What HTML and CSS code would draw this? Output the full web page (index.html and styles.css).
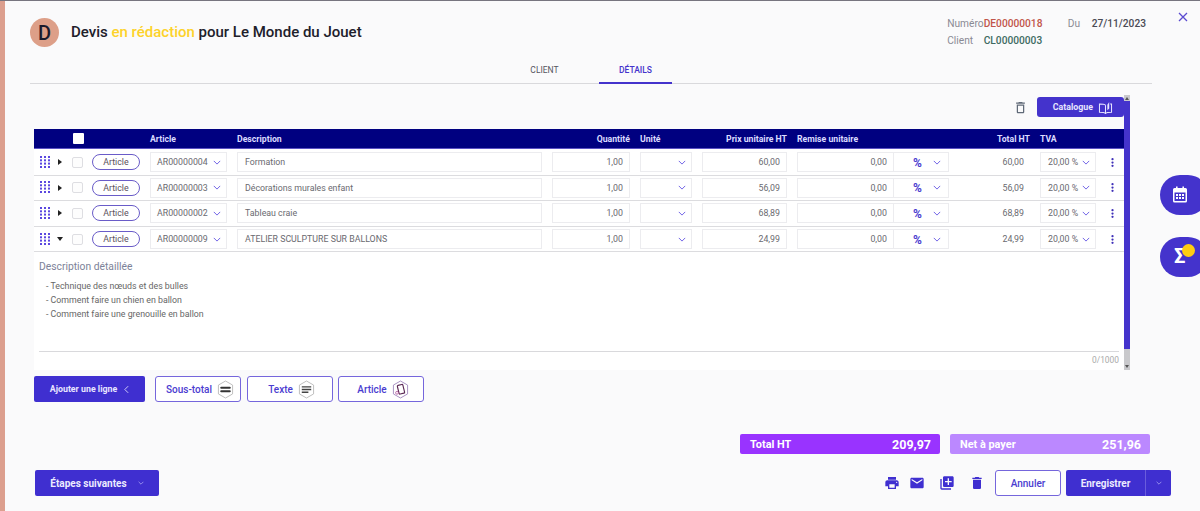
FILE: index.html
```html
<!DOCTYPE html>
<html lang="fr">
<head>
<meta charset="utf-8">
<title>Devis</title>
<link rel="stylesheet" href="styles.css">
</head>
<body>
<svg class="defs" width="0" height="0" aria-hidden="true">
  <symbol id="chev" viewBox="0 0 10 6"><path d="M1 1l4 4 4-4" fill="none" stroke="currentColor" stroke-width="1"/></symbol>
  <symbol id="grip" viewBox="0 0 11 12"><g fill="currentColor"><rect x="0" y="0" width="2" height="2"/><rect x="4" y="0" width="2" height="2"/><rect x="8" y="0" width="2" height="2"/><rect x="0" y="3.3" width="2" height="2"/><rect x="4" y="3.3" width="2" height="2"/><rect x="8" y="3.3" width="2" height="2"/><rect x="0" y="6.6" width="2" height="2"/><rect x="4" y="6.6" width="2" height="2"/><rect x="8" y="6.6" width="2" height="2"/><rect x="0" y="10" width="2" height="2"/><rect x="4" y="10" width="2" height="2"/><rect x="8" y="10" width="2" height="2"/></g></symbol>
  <symbol id="dots" viewBox="0 0 4 12"><g fill="currentColor"><circle cx="2" cy="1.6" r="1.5"/><circle cx="2" cy="6" r="1.5"/><circle cx="2" cy="10.4" r="1.5"/></g></symbol>
  <symbol id="trash" viewBox="0 0 24 24"><path fill="currentColor" d="M6 19c0 1.1.9 2 2 2h8c1.1 0 2-.9 2-2V7H6v12zM19 4h-3.5l-1-1h-5l-1 1H5v2h14V4z"/></symbol>
</svg>
<div class="stripe"></div>
<div class="main">
  <header class="header">
    <div class="head-top">
      <div class="avatar">D</div>
      <h1 class="title">Devis <span class="status">en rédaction</span> pour Le Monde du Jouet</h1>
      <div class="meta">
        <span class="meta-label">Numéro</span><span class="meta-num">DE00000018</span><span class="meta-label meta-du">Du</span><span class="meta-date">27/11/2023</span>
        <span class="meta-label">Client</span><span class="meta-client">CL00000003</span>
      </div>
    </div>
    <nav class="tabs">
      <a class="tab">CLIENT</a>
      <a class="tab tab-active">DÉTAILS</a>
    </nav>
  </header>

  <section class="panel">
    <div class="panel-body">
      <div class="toolbar">
        <svg class="tool-trash" viewBox="0 0 24 24"><path fill="currentColor" d="M6 19c0 1.1.9 2 2 2h8c1.1 0 2-.9 2-2V7H6v12zM8 9h8v10H8V9zm7.5-5l-1-1h-5l-1 1H5v2h14V4z"/></svg>
        <button class="btn-catalogue">Catalogue
          <svg class="book" viewBox="0 0 16 14"><path d="M8 4.5C7 3.6 5 3.2 1.5 3.2v9C5 12.2 7 12.6 8 13.5c1-.9 3-1.3 6.5-1.3v-9H13M8 4.5v9" fill="none" stroke="currentColor" stroke-width="1.1"/><path d="M10 10V4l2-3v7z" fill="currentColor"/></svg>
        </button>
      </div>

      <div class="table">
        <div class="row row-head">
          <span></span><span></span><span class="head-check"></span><span></span>
          <span class="th">Article</span>
          <span class="th">Description</span>
          <span class="th th-r th-qty">Quantité</span>
          <span class="th">Unité</span>
          <span class="th th-r th-price">Prix unitaire HT</span>
          <span class="th">Remise unitaire</span>
          <span></span>
          <span class="th th-r th-total">Total HT</span>
          <span class="th">TVA</span>
          <span></span>
        </div>

        <div class="row">
          <svg class="grip"><use href="#grip"/></svg><span class="caret caret-right"></span><span class="check"></span><span class="pill">Article</span>
          <div class="field f-article">AR00000004<svg class="chev"><use href="#chev"/></svg></div>
          <div class="field f-desc">Formation</div>
          <div class="field f-qty">1,00</div>
          <div class="field f-unit"><svg class="chev"><use href="#chev"/></svg></div>
          <div class="field f-price">60,00</div>
          <div class="field f-rem">0,00</div>
          <div class="field f-pct"><b class="pct">%</b><svg class="chev"><use href="#chev"/></svg></div>
          <div class="total">60,00</div>
          <div class="field f-tva">20,00 %<svg class="chev"><use href="#chev"/></svg></div>
          <svg class="dots"><use href="#dots"/></svg>
        </div>

        <div class="row">
          <svg class="grip"><use href="#grip"/></svg><span class="caret caret-right"></span><span class="check"></span><span class="pill">Article</span>
          <div class="field f-article">AR00000003<svg class="chev"><use href="#chev"/></svg></div>
          <div class="field f-desc">Décorations murales enfant</div>
          <div class="field f-qty">1,00</div>
          <div class="field f-unit"><svg class="chev"><use href="#chev"/></svg></div>
          <div class="field f-price">56,09</div>
          <div class="field f-rem">0,00</div>
          <div class="field f-pct"><b class="pct">%</b><svg class="chev"><use href="#chev"/></svg></div>
          <div class="total">56,09</div>
          <div class="field f-tva">20,00 %<svg class="chev"><use href="#chev"/></svg></div>
          <svg class="dots"><use href="#dots"/></svg>
        </div>

        <div class="row">
          <svg class="grip"><use href="#grip"/></svg><span class="caret caret-right"></span><span class="check"></span><span class="pill">Article</span>
          <div class="field f-article">AR00000002<svg class="chev"><use href="#chev"/></svg></div>
          <div class="field f-desc">Tableau craie</div>
          <div class="field f-qty">1,00</div>
          <div class="field f-unit"><svg class="chev"><use href="#chev"/></svg></div>
          <div class="field f-price">68,89</div>
          <div class="field f-rem">0,00</div>
          <div class="field f-pct"><b class="pct">%</b><svg class="chev"><use href="#chev"/></svg></div>
          <div class="total">68,89</div>
          <div class="field f-tva">20,00 %<svg class="chev"><use href="#chev"/></svg></div>
          <svg class="dots"><use href="#dots"/></svg>
        </div>

        <div class="row">
          <svg class="grip"><use href="#grip"/></svg><span class="caret caret-down"></span><span class="check"></span><span class="pill">Article</span>
          <div class="field f-article">AR00000009<svg class="chev"><use href="#chev"/></svg></div>
          <div class="field f-desc">ATELIER SCULPTURE SUR BALLONS</div>
          <div class="field f-qty">1,00</div>
          <div class="field f-unit"><svg class="chev"><use href="#chev"/></svg></div>
          <div class="field f-price">24,99</div>
          <div class="field f-rem">0,00</div>
          <div class="field f-pct"><b class="pct">%</b><svg class="chev"><use href="#chev"/></svg></div>
          <div class="total">24,99</div>
          <div class="field f-tva">20,00 %<svg class="chev"><use href="#chev"/></svg></div>
          <svg class="dots"><use href="#dots"/></svg>
        </div>

        <div class="detail">
          <div class="detail-label">Description détaillée</div>
          <div class="detail-text">
            <p>- Technique des nœuds et des bulles</p>
            <p>- Comment faire un chien en ballon</p>
            <p>- Comment faire une grenouille en ballon</p>
          </div>
          <div class="detail-count">0/1000</div>
        </div>
      </div>
    </div>
    <div class="scrollbar"><span class="scroll-up"></span><span class="scroll-thumb"></span><span class="scroll-down"></span></div>
  </section>

  <div class="add-row">
    <button class="btn-add">Ajouter une ligne<svg class="add-chev" viewBox="0 0 6 10"><path d="M5 1L1 5l4 4" fill="none" stroke="currentColor" stroke-width="1"/></svg></button>
    <button class="btn-line">Sous-total
      <svg class="hex" viewBox="0 0 18 20"><path d="M9 1l7.500 4.300v9.400L9 19l-7.500-4.300v-9.400z" fill="#fff" stroke="#bbb"/><path d="M4.500 7h9a1 1 0 0 1 0 2.200h-9a1 1 0 0 1 0-2.200zM4.500 10.800h9a1 1 0 0 1 0 2.200h-9a1 1 0 0 1 0-2.200z" fill="#333"/></svg>
    </button>
    <button class="btn-line">Texte
      <svg class="hex" viewBox="0 0 18 20"><path d="M9 1l7.500 4.300v9.400L9 19l-7.500-4.300v-9.400z" fill="#fff" stroke="#bbb"/><path d="M4 6.500h10v1.500H4zM4 9.300h10v1.500H4zM4 12.100h7v1.500H4z" fill="#444"/></svg>
    </button>
    <button class="btn-line">Article
      <svg class="hex" viewBox="0 0 18 20"><path d="M9 1l7.500 4.300v9.400L9 19l-7.500-4.300v-9.400z" fill="#fff" stroke="#a58cc0"/><rect x="6.500" y="5" width="6" height="9.500" rx="1" transform="rotate(-14 9.500 9.700)" fill="none" stroke="#5b2a55" stroke-width="1.200"/><circle cx="5.300" cy="13.500" r="1.500" fill="none" stroke="#b0529a" stroke-width=".8"/></svg>
    </button>
  </div>

  <div class="totals">
    <div class="sum sum-ht"><span>Total HT</span><strong>209,97</strong></div>
    <div class="sum sum-net"><span>Net à payer</span><strong>251,96</strong></div>
  </div>

  <footer class="footer">
    <button class="btn-steps">Étapes suivantes<svg class="steps-chev"><use href="#chev"/></svg></button>
    <div class="foot-actions">
      <svg class="ico ico-print" viewBox="0 0 24 24"><path fill="currentColor" d="M19 8H5c-1.660 0-3 1.340-3 3v6h4v4h12v-4h4v-6c0-1.660-1.340-3-3-3zm-3 11H8v-5h8v5zm3-7c-.55 0-1-.45-1-1s.45-1 1-1 1 .45 1 1-.45 1-1 1zm-1-9H6v4h12V3z"/></svg>
      <svg class="ico ico-mail" viewBox="0 0 24 24"><path fill="currentColor" d="M20 4H4c-1.100 0-1.990.9-1.990 2L2 18c0 1.100.9 2 2 2h16c1.100 0 2-.9 2-2V6c0-1.100-.9-2-2-2zm0 4l-8 5-8-5V6l8 5 8-5v2z"/></svg>
      <svg class="ico ico-copy" viewBox="0 0 24 24"><path fill="currentColor" d="M4 6H2v14c0 1.100.9 2 2 2h14v-2H4V6zm16-4H8c-1.100 0-2 .9-2 2v12c0 1.100.9 2 2 2h12c1.100 0 2-.9 2-2V4c0-1.100-.9-2-2-2zm-1 9h-4v4h-2v-4H9V9h4V5h2v4h4v2z"/></svg>
      <svg class="ico ico-trash"><use href="#trash"/></svg>
      <button class="btn-cancel">Annuler</button>
      <div class="save-group">
        <button class="btn-save">Enregistrer</button>
        <button class="btn-save-more"><svg class="steps-chev"><use href="#chev"/></svg></button>
      </div>
    </div>
  </footer>
</div>

<button class="close" aria-label="Fermer"><svg viewBox="0 0 10 10"><path d="M1 1l8 8M9 1l-8 8" stroke="currentColor" stroke-width="1.300"/></svg></button>
<div class="side side-cal">
  <svg viewBox="0 0 16 17"><path fill="#fff" d="M2.500 2H4V.6h1.600V2h4.800V.6H12V2h1.500A1.500 1.500 0 0 1 15 3.500v11.500a1.500 1.500 0 0 1-1.500 1.500h-11A1.500 1.500 0 0 1 1 15V3.500A1.500 1.500 0 0 1 2.500 2zm0 4.500V15h11V6.500z"/><path fill="#fff" d="M4 8h2v2H4zM7 8h2v2H7zM10 8h2v2h-2zM4 11h2v2H4zM7 11h2v2H7zM10 11h2v2h-2z"/></svg>
</div>
<div class="side side-sum"><span class="sigma">Σ</span><span class="side-dot"></span></div>
</body>
</html>
```
FILE: styles.css
```css
* { box-sizing: border-box; }
html, body { margin: 0; padding: 0; }
body {
  width: 1200px; height: 511px; overflow: hidden; display: flex;
  background: #fafafb; font-family: Roboto, "Liberation Sans", sans-serif;
  border-top: 1px solid #77757f; position: relative; color: #555;
}
button { font-family: inherit; cursor: pointer; padding: 0; }
.defs { position: absolute; }
.stripe { width: 5px; background: #dc9f8e; flex: none; margin-top: -1px; }
.main { width: 1195px; padding-left: 25px; display: flex; flex-direction: column; }

.header { width: 1122px; height: 83px; border-bottom: 1px solid #d9d9dc; flex: none; }
.head-top { height: 60px; display: flex; padding-top: 17px; }
.avatar {
  width: 29px; height: 29px; border-radius: 50%; background: #dd9f88; color: #1a1a2c;
  font-size: 20px; font-weight: 500; display: flex; align-items: center; justify-content: center; flex: none;
}
.title { margin: 0 0 0 12px; font-size: 15px; font-weight: 500; line-height: 29px; color: #20202a; white-space: nowrap; }
.status { color: #fdd22a; }
.meta {
  margin-left: auto; margin-top: -1px; margin-right: 6px; display: grid; grid-template-columns: 36.500px 84px 24px auto;
  grid-auto-rows: 17px; font-size: 10.200px; line-height: 13px; align-content: start;
}
.meta-label { color: #8a8a94; }
.meta-num { color: #c1554a; font-weight: 500; }
.meta-date { color: #4a4a55; font-weight: 500; }
.meta-client { color: #3e6b62; font-weight: 500; }

.tabs { display: flex; justify-content: center; gap: 18px; height: 22px; padding-right: 2px; }
.tab { width: 73px; height: 23px; font-size: 8.500px; line-height: 18px; text-align: center; color: #55555f; }
.tab-active { color: #4433cc; font-weight: 500; border-bottom: 2px solid #4433cc; }

.panel { margin: 11px 0 0 4px; width: 1096px; height: 275px; display: flex; flex: none; }
.panel-body { width: 1090px; display: flex; flex-direction: column; }
.toolbar { height: 34px; display: flex; align-items: flex-start; justify-content: flex-end; padding-top: 2px; }
.tool-trash { width: 15px; height: 15px; color: #606a78; margin: 3px 9px 0 0; }
.btn-catalogue {
  width: 87px; height: 20px; border: 0; border-radius: 3px; background: #4433cc; color: #e8e6ff;
  font-size: 8.800px; font-weight: 700; display: flex; align-items: center; justify-content: flex-end; gap: 5px; padding-right: 11px;
}
.book { width: 15px; height: 13px; }

.table { flex: 1; background: #fff; display: flex; flex-direction: column; }
.row {
  display: grid; align-items: center; height: 25.600px; border-bottom: 1px solid #dcdcdf; flex: none;
  grid-template-columns: 20px 18px 20px 58px 87px 315px 88px 62px 95px 96px 56px 91px 66px 18px;
}
.row-head { height: 20px; margin-bottom: 1px; background: #000080; border: 0; border-bottom: 1px solid #5b52c4; }
.th { font-size: 8.700px; font-weight: 700; color: #dcdcff; white-space: nowrap; }
.th-r { text-align: right; }
.th-qty { padding-right: 10px; }
.th-price { padding-right: 10px; }
.th-total { padding-right: 10px; }
.head-check { width: 11px; height: 11px; background: #fff; border-radius: 1px; margin-left: 1px; }

.grip { width: 11px; height: 12px; color: #5b48e0; margin-left: 6px; margin-top: -1px; }
.caret { width: 0; height: 0; margin-left: 4px; }
.caret-right { border-left: 4px solid #222; border-top: 3px solid transparent; border-bottom: 3px solid transparent; }
.caret-down { border-top: 4px solid #222; border-left: 3px solid transparent; border-right: 3px solid transparent; margin-left: 3px; }
.check { width: 11px; height: 11px; border: 1px solid #dedee2; border-radius: 2px; background: #fdfdfd; }
.pill {
  width: 48px; height: 16px; border: 1px solid #6a5cc8; border-radius: 8px; font-size: 8.800px; line-height: 14px;
  text-align: center; color: #5a505a;
}
.field {
  height: 20px; border: 1px solid #ececef; background: #fff; font-size: 8.800px; line-height: 18px; color: #6a6a70;
  padding: 0 6px; display: flex; align-items: center; white-space: nowrap;
}
.chev { width: 8px; height: 5px; color: #4f3fe0; flex: none; margin-left: auto; }
.f-article { width: 77px; padding-right: 5px; }
.f-desc { width: 305px; padding-left: 7px; }
.f-qty { width: 78px; justify-content: flex-end; }
.f-unit { width: 52px; padding-right: 5px; }
.f-price { width: 85px; justify-content: flex-end; }
.f-rem { width: 96px; justify-content: flex-end; border-right: 0; }
.f-pct { width: 56px; padding-right: 7px; padding-left: 19px; border-left: 1px solid #ececef; }
.pct { color: #4a3cd0; font-size: 12px; font-weight: 700; margin-top: 1px; }
.total { font-size: 8.800px; color: #6a6a70; text-align: right; padding-right: 16px; }
.f-tva { width: 56px; padding-right: 5px; padding-left: 7px; }
.dots { width: 3px; height: 9px; color: #3f30b8; margin-left: 5px; }

.detail { flex: 1; padding: 9px 5px 0; display: flex; flex-direction: column; }
.detail-label { font-size: 10.300px; line-height: 12px; color: #7c8298; }
.detail-text { height: 72px; margin-top: 7px; padding-left: 7px; border-bottom: 1px solid #d9d9dc; font-size: 8.800px; line-height: 13.700px; color: #666; }
.detail-text p { margin: 0; }
.detail-count { font-size: 8.400px; line-height: 16px; color: #aaa; text-align: right; }

.scrollbar { width: 6px; background: #c9c9cc; display: flex; flex-direction: column; align-items: center; }
.scroll-up { border-bottom: 3px solid #555; border-left: 2px solid transparent; border-right: 2px solid transparent; margin: 2px 0 1px; }
.scroll-thumb { width: 6px; height: 248px; background: #4433cc; }
.scroll-down { border-top: 3px solid #555; border-left: 2px solid transparent; border-right: 2px solid transparent; margin-top: auto; margin-bottom: 2px; }

.add-row { margin: 6px 0 0 4px; display: flex; height: 26px; flex: none; }
.btn-add {
  width: 111px; background: #3f2fd0; color: #e8e6ff; border: 0; border-radius: 2px; font-size: 8.800px; font-weight: 700;
  display: flex; align-items: center; justify-content: center; gap: 7px; margin-right: 10px;
}
.add-chev { width: 5px; height: 9px; }
.btn-line {
  width: 86px; background: #fff; border: 1px solid #7566dc; border-radius: 3px; color: #4a3cd0; font-size: 10px; font-weight: 500;
  display: flex; align-items: center; justify-content: center; gap: 5px; margin-right: 5.500px; padding-left: 4px;
}
.hex { width: 17px; height: 19px; }

.totals { margin: 32px 0 0 710px; display: flex; gap: 10px; flex: none; }
.sum {
  width: 200px; height: 20px; border-radius: 2px; display: flex; align-items: center; justify-content: space-between;
  padding: 0 9px 0 10px; color: #fff;
}
.sum span { font-size: 10.900px; font-weight: 700; }
.sum strong { font-size: 12.500px; font-weight: 700; }
.sum-ht { background: #9933ff; }
.sum-net { background: #bb88ff; }

.footer { margin: 16px 0 0 5px; display: flex; align-items: stretch; justify-content: space-between; width: 1136px; height: 26px; flex: none; }
.btn-steps {
  width: 124px; background: #3f2fd0; color: #ecebff; border: 0; border-radius: 2px; font-size: 10px; font-weight: 700;
  display: flex; align-items: center; justify-content: center; gap: 11px;
}
.steps-chev { width: 6px; height: 4px; color: #cfcaff; }
.foot-actions { display: flex; align-items: center; }
.ico { width: 16px; height: 16px; color: #3f2fd0; flex: none; }
.ico-print { margin-right: 9px; }
.ico-mail { margin-right: 14px; }
.ico-copy { margin-right: 14px; }
.ico-trash { margin-right: 10px; }
.btn-cancel {
  width: 66px; height: 26px; background: #fff; border: 1px solid #7566dc; border-radius: 3px; color: #4a3cd0;
  font-size: 10px; font-weight: 500; margin-right: 5px;
}
.save-group { display: flex; height: 26px; border-radius: 2px; overflow: hidden; }
.btn-save { width: 79px; border: 0; background: #3f2fd0; color: #ecebff; font-size: 10px; font-weight: 700; }
.btn-save-more { width: 26px; border: 0; border-left: 1px solid #6a5cdc; background: #3f2fd0; display: flex; align-items: center; justify-content: center; }

.close { position: absolute; left: 1178px; top: 11px; width: 10px; height: 10px; border: 0; background: none; color: #5b4bd0; }
.close svg { display: block; }
.side { position: absolute; left: 1160px; width: 48px; height: 40px; border-radius: 20px; background: #4433cc; }
.side-cal { top: 174px; }
.side-cal svg { position: absolute; left: 12px; top: 11px; width: 16px; height: 17px; }
.side-sum { top: 236px; }
.sigma { position: absolute; left: 14px; top: 7px; color: #fff; font-size: 20px; line-height: 24px; font-weight: 700; }
.side-dot { position: absolute; left: 22px; top: 7px; width: 13px; height: 13px; border-radius: 50%; background: #ffcc11; }
```
